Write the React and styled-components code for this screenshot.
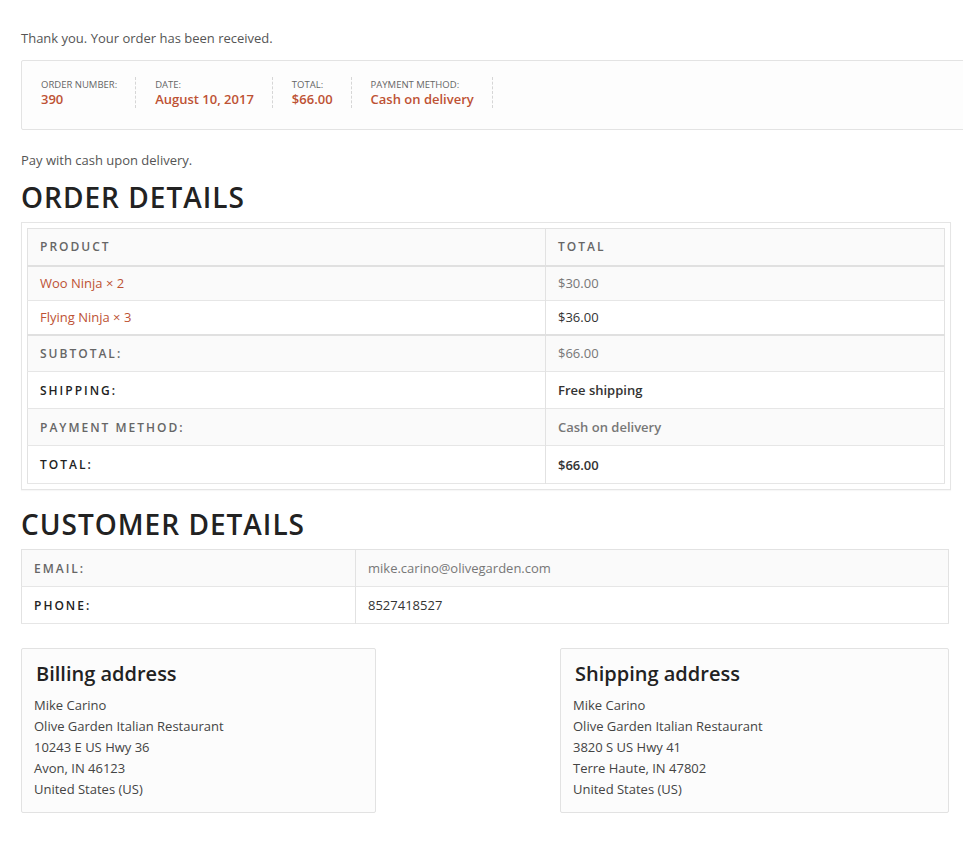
import React from "react";
import styled, { createGlobalStyle } from "styled-components";

const Global = createGlobalStyle`
  html, body { margin: 0; padding: 0; background: #fff; }
  body { font-family: "Open Sans", "Liberation Sans", sans-serif; color: #555; font-size: 13px; }
  * { box-sizing: border-box; }
`;

const Page = styled.div`
  padding: 28px 15px 40px 21px;
  width: 963px;
  overflow: hidden;
`;

const Notice = styled.p`
  margin: 0 0 12px;
  font-size: 13px;
  line-height: 20px;
  color: #555;
`;

const Overview = styled.ul`
  list-style: none;
  margin: 0 -40px 0 0;
  padding: 16px 0 0;
  display: flex;
  align-items: flex-start;
  border: 1px solid #e3e3e3;
  border-radius: 2px;
  background: #fdfdfd;
  height: 70px;
`;

const OverviewItem = styled.li`
  padding: 2px 18px 1px 19px;
  border-right: 1px dashed #d6d6d6;
  display: flex;
  flex-direction: column;
`;

const OverviewLabel = styled.span`
  font-size: 9.5px;
  line-height: 12px;
  color: #666;
  text-transform: uppercase;
`;

const OverviewValue = styled.strong`
  font-size: 13px;
  line-height: 16px;
  font-weight: 600;
  color: #bd5234;
`;

const Para = styled.p`
  margin: 21px 0 0;
  font-size: 13px;
  line-height: 18px;
  color: #555;
`;

const Heading = styled.h2`
  margin: ${(p) => p.$top || "10px"} 0 ${(p) => p.$bottom || "7px"};
  font-size: 28px;
  line-height: 36px;
  font-weight: 600;
  letter-spacing: 1px;
  color: #222;
  text-transform: uppercase;
`;

const TableWrap = styled.div`
  border: 1px solid #e5e5e5;
  padding: 5px;
  background: #fff;
  width: 930px;
  box-shadow: 0 1px 1px rgba(0, 0, 0, 0.03);
`;

const Table = styled.table`
  width: 100%;
  border-collapse: collapse;
  border: 1px solid #e2e2e2;
`;

const Row = styled.tr`
  background: ${(p) => (p.$striped ? "#fafafa" : "#fff")};
  color: ${(p) => (p.$striped ? "#777" : "#333")};
  border-bottom: ${(p) => (p.$thick ? "2px solid #e0e0e0" : "1px solid #e6e6e6")};
`;

const Th = styled.th`
  text-align: left;
  font-size: 12px;
  font-weight: 600;
  letter-spacing: 2px;
  text-transform: uppercase;
  color: ${(p) => (p.$dark ? "#222" : "#666")};
  padding: 0 12px;
  height: ${(p) => p.$h || 36}px;
  width: ${(p) => p.$w || "auto"};
  border-right: 1px solid #e2e2e2;
`;

const Td = styled.td`
  font-size: 13px;
  padding: 0 12px;
  height: ${(p) => p.$h || 34}px;
  color: inherit;
  font-weight: ${(p) => (p.$bold ? 600 : 400)};
  border-right: ${(p) => (p.$divider ? "1px solid #e2e2e2" : "none")};
`;

const ProductLink = styled.a`
  color: #bd5234;
  text-decoration: none;
`;

const CustTable = styled.table`
  width: 928px;
  border-collapse: collapse;
  border: 1px solid #e2e2e2;
`;

const Addresses = styled.div`
  margin-top: 24px;
  width: 928px;
  display: flex;
  justify-content: space-between;
`;

const AddressBox = styled.div`
  width: ${(p) => p.$w}px;
  height: 165px;
  border: 1px solid #e2e2e2;
  border-radius: 2px;
  background: #fcfcfc;
  padding: 10px 12px 0 12px;
`;

const AddressTitle = styled.h3`
  margin: 0 0 6px 2px;
  font-size: 20px;
  line-height: 30px;
  font-weight: 600;
  color: #222;
`;

const Address = styled.address`
  font-style: normal;
  font-size: 13px;
  line-height: 21px;
  color: #444;
`;

const overview = [
  ["Order number:", "390"],
  ["Date:", "August 10, 2017"],
  ["Total:", "$66.00"],
  ["Payment method:", "Cash on delivery"],
];

const billing = ["Mike Carino", "Olive Garden Italian Restaurant", "10243 E US Hwy 36", "Avon, IN 46123", "United States (US)"];
const shipping = ["Mike Carino", "Olive Garden Italian Restaurant", "3820 S US Hwy 41", "Terre Haute, IN 47802", "United States (US)"];

export default function App() {
  return (
    <Page>
      <Global />
      <Notice>Thank you. Your order has been received.</Notice>
      <Overview>
        {overview.map(([l, v]) => (
          <OverviewItem key={l}>
            <OverviewLabel>{l}</OverviewLabel>
            <OverviewValue>{v}</OverviewValue>
          </OverviewItem>
        ))}
      </Overview>
      <Para>Pay with cash upon delivery.</Para>
      <Heading>Order details</Heading>
      <TableWrap>
        <Table>
          <thead>
            <Row $striped $thick>
              <Th $w="518px" $h={37}>Product</Th>
              <Th $h={37}>Total</Th>
            </Row>
          </thead>
          <tbody>
            <Row $striped>
              <Td $h={35} $divider>
                <ProductLink>Woo Ninja × 2</ProductLink>
              </Td>
              <Td $h={35}>$30.00</Td>
            </Row>
            <Row $thick>
              <Td $h={34} $divider>
                <ProductLink>Flying Ninja × 3</ProductLink>
              </Td>
              <Td $h={34}>$36.00</Td>
            </Row>
          </tbody>
          <tfoot>
            <Row $striped>
              <Th $h={37}>Subtotal:</Th>
              <Td $h={37}>$66.00</Td>
            </Row>
            <Row>
              <Th $dark $h={37}>Shipping:</Th>
              <Td $h={37} $bold>Free shipping</Td>
            </Row>
            <Row $striped>
              <Th $h={37}>Payment method:</Th>
              <Td $h={37} $bold>Cash on delivery</Td>
            </Row>
            <Row>
              <Th $dark $h={38}>Total:</Th>
              <Td $h={38} $bold>$66.00</Td>
            </Row>
          </tfoot>
        </Table>
      </TableWrap>
      <Heading $top="16px" $bottom="7px">Customer details</Heading>
      <CustTable>
        <tbody>
          <Row $striped>
            <Th $w="334px" $h={37}>Email:</Th>
            <Td $h={37}>mike.carino@olivegarden.com</Td>
          </Row>
          <Row>
            <Th $dark $h={37}>Phone:</Th>
            <Td $h={37}>8527418527</Td>
          </Row>
        </tbody>
      </CustTable>
      <Addresses>
        <AddressBox $w={355}>
          <AddressTitle>Billing address</AddressTitle>
          <Address>
            {billing.map((l) => (
              <div key={l}>{l}</div>
            ))}
          </Address>
        </AddressBox>
        <AddressBox $w={389}>
          <AddressTitle>Shipping address</AddressTitle>
          <Address>
            {shipping.map((l) => (
              <div key={l}>{l}</div>
            ))}
          </Address>
        </AddressBox>
      </Addresses>
    </Page>
  );
}
